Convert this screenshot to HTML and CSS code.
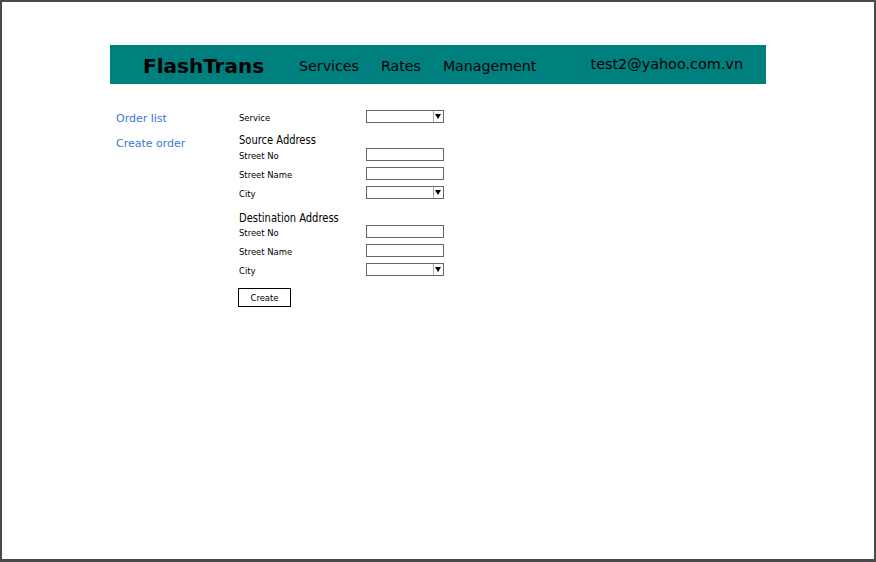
FILE: index.html
```html
<!DOCTYPE html>
<html>
<head>
<meta charset="utf-8">
<link rel="stylesheet" href="styles.css">
</head>
<body>
<div class="frame">
  <header class="topbar">
    <div class="brand">FlashTrans</div>
    <nav class="menu">
      <span>Services</span>
      <span>Rates</span>
      <span>Management</span>
    </nav>
    <div class="user">test2@yahoo.com.vn</div>
  </header>
  <div class="content">
    <aside class="side">
      <a class="side-link">Order list</a>
      <a class="side-link">Create order</a>
    </aside>
    <form class="order-form">
      <div class="row"><span class="lbl">Service</span><span class="select"><span class="arrow"></span></span></div>
      <div class="heading h-src"><span>Source Address</span></div>
      <div class="row"><span class="lbl">Street No</span><span class="input"></span></div>
      <div class="row"><span class="lbl">Street Name</span><span class="input"></span></div>
      <div class="row"><span class="lbl">City</span><span class="select"><span class="arrow"></span></span></div>
      <div class="heading h-dst"><span>Destination Address</span></div>
      <div class="row"><span class="lbl">Street No</span><span class="input"></span></div>
      <div class="row"><span class="lbl">Street Name</span><span class="input"></span></div>
      <div class="row"><span class="lbl">City</span><span class="select"><span class="arrow"></span></span></div>
      <div class="actions"><span class="btn">Create</span></div>
    </form>
  </div>
</div>
</body>
</html>
```

FILE: styles.css
```css
* { box-sizing: border-box; }
html, body { margin: 0; padding: 0; background: #fff; }
body { font-family: "DejaVu Sans", sans-serif; }

.frame {
  width: 876px;
  height: 562px;
  border: 2px solid #4a4a4a;
  border-bottom-width: 3px;
  padding: 43px 0 0 108px;
  background: #fff;
}

.topbar {
  width: 656px;
  height: 39px;
  background: #007f7f;
  display: flex;
  align-items: center;
  padding: 0 23px 0 33px;
  color: #000;
}
.brand {
  font-weight: bold;
  font-size: 20px;
  line-height: 24px;
  margin-top: 2px;
}
.menu {
  display: flex;
  gap: 22px;
  margin-left: 35px;
  font-size: 14.2px;
  line-height: 20px;
  margin-top: 3px;
}
.user {
  margin-left: auto;
  font-size: 14.4px;
  line-height: 20px;
  margin-top: -1px;
}

.content {
  display: flex;
  padding-top: 28px;
}
.side {
  width: 129px;
  padding-left: 6px;
  display: flex;
  flex-direction: column;
  gap: 11px;
}
.side-link {
  color: #3a77d0;
  font-size: 11px;
  line-height: 14px;
  white-space: nowrap;
}

.order-form {
  display: flex;
  flex-direction: column;
  font-family: "DejaVu Sans Condensed", "DejaVu Sans", sans-serif;
  margin-top: -5px;
}
.row {
  display: flex;
  align-items: center;
  height: 19px;
}
.lbl {
  width: 127px;
  font-size: 9.4px;
  line-height: 12px;
  padding-top: 2px;
  color: #000;
}
.input, .select {
  display: block;
  width: 78px;
  height: 13px;
  border: 1px solid #666;
  background: #fff;
}
.select {
  position: relative;
}
.arrow {
  position: absolute;
  right: 0;
  top: 0;
  width: 10px;
  height: 11px;
  border-left: 1px solid #aaa;
}
.arrow::after {
  content: "";
  position: absolute;
  left: 1px;
  top: 3px;
  border-left: 3.5px solid transparent;
  border-right: 3.5px solid transparent;
  border-top: 5px solid #000;
}

.heading {
  font-size: 13px;
  line-height: 14px;
  white-space: nowrap;
  color: #000;
}
.heading span {
  display: inline-block;
  transform: translateY(2px) scaleX(0.85);
  transform-origin: left center;
}
.h-src { margin-top: 5px; }
.h-dst { margin-top: 8px; line-height: 12px; }

.actions { margin-top: 7px; }
.btn {
  display: inline-flex;
  align-items: center;
  justify-content: center;
  width: 53px;
  height: 19px;
  border: 1px solid #000;
  font-size: 9.4px;
  padding-top: 1px;
  margin-left: -1px;
}
```
